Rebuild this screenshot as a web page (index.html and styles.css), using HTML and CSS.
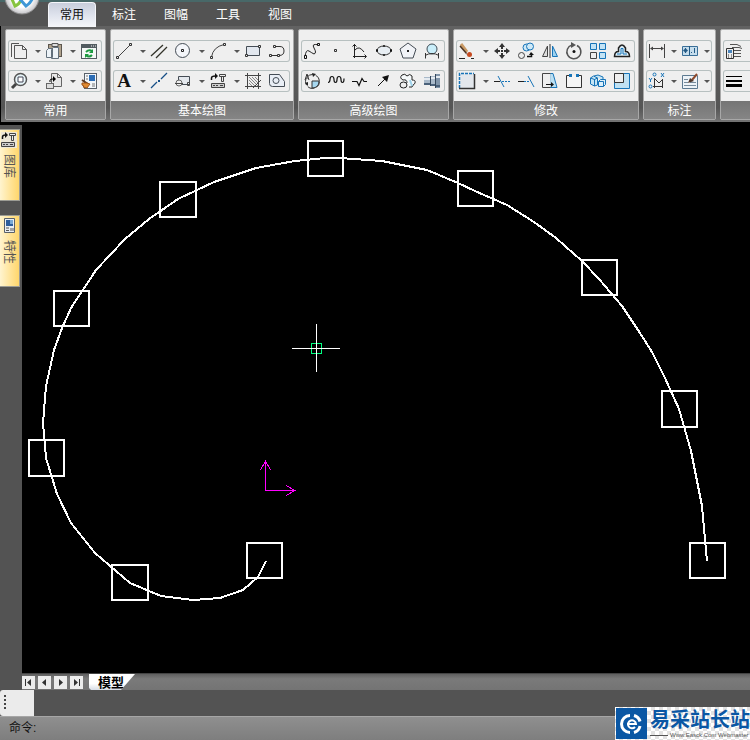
FILE: index.html
```html
<!DOCTYPE html>
<html lang="zh-CN">
    <head>
        <meta charset="UTF-8" />
        <meta name="viewport" content="width=device-width, initial-scale=1.0" />
        <title>模型</title>
        <link rel="stylesheet" href="styles.css">
    </head>
    <body>
        <header class="titlebar">
            <button class="app-button" aria-label="菜单">
                <svg width="36" height="36" viewBox="0 0 36 36">
                    <defs>
                        <radialGradient id="ball">
                            <stop offset="0.6" stop-color="#ffffff" />
                            <stop offset="1" stop-color="#c4c4c8" />
                        </radialGradient>
                    </defs>
                    <circle cx="18" cy="18" r="17" fill="url(#ball)" stroke="#8a8a8a" />
                    <path d="M7 18l4 9q5-2 7-8" fill="none" stroke="#86c440" stroke-width="3" />
                    <path d="M15 19l7 8q5-3 7-9" fill="none" stroke="#3f97d6" stroke-width="3" />
                </svg>
            </button>
            <nav class="tabs">
                <button class="tab active">常用</button>
                <button class="tab">标注</button>
                <button class="tab">图幅</button>
                <button class="tab">工具</button>
                <button class="tab">视图</button>
            </nav>
        </header>

        <div class="ribbon">
            <section class="panel">
                <div class="tools">
                    <div class="row">
                        <button class="tool" aria-label="复制">
                            <svg viewBox="0 0 20 20"><path d="M10 2.500H2.500V16" stroke="#555" /><path d="M5.500 4.500h8l4 4v9h-12z" fill="#eee" stroke="#555" /><path d="M13.500 4.500v4h4" stroke="#555" /></svg>
                        </button>
                        <button class="more" aria-label="更多复制"></button>
                        <button class="tool" aria-label="粘贴">
                            <svg viewBox="0 0 20 20"><rect x="4.500" y="3.500" width="13" height="12" fill="#b0a28d" stroke="#5c564e" /><path d="M8 2.500h6v3H8z" fill="#ddd" stroke="#555" /><path d="M2.500 9.500l2-2h4v9h-6zM7.500 8.500l2-2h5v11h-7z" fill="#edf3f8" stroke="#62707c" /></svg>
                        </button>
                        <button class="more" aria-label="更多粘贴"></button>
                        <button class="tool" aria-label="刷新">
                            <svg viewBox="0 0 20 20"><rect x="2.500" y="3.500" width="15" height="14" fill="#f5f9f7" stroke="#525b60" /><path d="M2 3h16v4H2z" fill="#525b60" /><path d="M12 5h1M14 5h1M16 5h1" stroke="#eee" /><path d="M7 11q3-3 6-1M13 14q-3 3-6 0" stroke="#1c9a40" stroke-width="2" /><path d="M14 8v4h-4zM6 17v-4h4z" fill="#1c9a40" /></svg>
                        </button>
                    </div>
                    <div class="row">
                        <button class="tool" aria-label="显示窗口">
                            <svg viewBox="0 0 20 20"><circle cx="11.500" cy="8.500" r="6" fill="#e8f6fa" stroke="#555" stroke-width="1.500" /><path d="M9 6h5v5H9z" fill="#fff" stroke="#445" /><path d="M7 13l-4 4" stroke="#444" stroke-width="3" /></svg>
                        </button>
                        <button class="more" aria-label="更多显示"></button>
                        <button class="tool" aria-label="块">
                            <svg viewBox="0 0 20 20"><path d="M7.500 2.500h6l4 4v9h-10z" fill="#e8e8e8" stroke="#666" /><path d="M13.500 2.500v4h4" stroke="#666" /><rect x="2.500" y="12.500" width="7" height="5" fill="#ddd" stroke="#666" /><path d="M6 11V9q0-1 3-1" stroke="#000" /><path d="M9 5l3 3-3 3z" fill="#000" /></svg>
                        </button>
                        <button class="more" aria-label="更多块"></button>
                        <button class="tool" aria-label="格式刷">
                            <svg viewBox="0 0 20 20"><rect x="5.500" y="2.500" width="12" height="15" fill="#f3f7fb" stroke="#59616a" /><path d="M10 4h6v6h-6z" fill="#2c6db5" /><path d="M7 5h2M7 8h2M13 13h3M13 15h3" stroke="#777" /><path d="M3 9l6 4" stroke="#5a3924" stroke-width="2" /><path d="M3 12h5l3 1-3 4-4-1 1-1-2-1z" fill="#e08a32" stroke="#9c5318" /></svg>
                        </button>
                    </div>
                </div>
                <h2>常用</h2>
            </section>

            <section class="panel">
                <div class="tools">
                    <div class="row">
                        <button class="tool" aria-label="直线">
                            <svg viewBox="0 0 20 20"><path d="M3 17L17 3" stroke="#444" /><path d="M2.500 15.500h2v2h-2zM15.500 2.500h2v2h-2z" fill="#eee" stroke="#333" /></svg>
                        </button>
                        <button class="more" aria-label="更多直线"></button>
                        <button class="tool" aria-label="平行线">
                            <svg viewBox="0 0 20 20"><path d="M2 15L14 4M7 17L18 6" stroke="#33332a" stroke-width="1.300" /></svg>
                        </button>
                        <button class="tool" aria-label="圆">
                            <svg viewBox="0 0 20 20"><circle cx="9.500" cy="9.500" r="7" fill="#f4f6fa" stroke="#444c55" /><path d="M8.500 8.500h2v2h-2z" stroke="#222" /></svg>
                        </button>
                        <button class="more" aria-label="更多圆"></button>
                        <button class="tool" aria-label="圆弧">
                            <svg viewBox="0 0 20 20"><path d="M3.500 16Q5 6 16 3.500" stroke="#444" /><path d="M2.500 15.500h2v2h-2zM15.500 2.500h2v2h-2z" fill="#eee" stroke="#333" /></svg>
                        </button>
                        <button class="more" aria-label="更多圆弧"></button>
                        <button class="tool" aria-label="矩形">
                            <svg viewBox="0 0 20 20"><path d="M3.500 5.500h13v9h-13z" fill="#e2e7ee" stroke="#444c55" /><path d="M2.500 13.500h2v2h-2zM15.500 4.500h2v2h-2z" fill="#eee" stroke="#333" /></svg>
                        </button>
                        <button class="tool" aria-label="多段线">
                            <svg viewBox="0 0 20 20"><path d="M8 5.500h5q4 0 4 4.500t-5 4.500H3" stroke="#333" /><path d="M6.500 4.500h2v2h-2zM2.500 13.500h2v2h-2zM10.500 13.500h2v2h-2z" fill="#eee" stroke="#333" /></svg>
                        </button>
                    </div>
                    <div class="row">
                        <button class="tool letter" aria-label="文字">A</button>
                        <button class="more" aria-label="更多文字"></button>
                        <button class="tool" aria-label="中心线">
                            <svg viewBox="0 0 20 20"><path d="M2 17l6-6M12 8l6-6" stroke="#174f86" stroke-width="1.300" /><path d="M9 9h2v2H9z" fill="#174f86" /></svg>
                        </button>
                        <button class="tool" aria-label="局部放大">
                            <svg viewBox="0 0 20 20"><path d="M5.500 5.500h11v8h-11z" fill="#e4e8ed" stroke="#444c55" /><circle cx="6" cy="12" r="3" fill="#eee" stroke="#666" /><path d="M2 12.500h8M14.500 11.500h2v3h-2z" stroke="#444" /></svg>
                        </button>
                        <button class="more" aria-label="更多放大"></button>
                        <button class="tool" aria-label="图库">
                            <svg viewBox="0 0 20 20"><path d="M3.500 9V7q0-2 4-2" stroke="#111" stroke-width="1.500" /><path d="M7 2l3 3-3 3z" fill="#111" /><path d="M11.500 3.500h6v2h-6zM13.500 5.500h2v5h-2z" fill="#eee" stroke="#444" /><path d="M3.500 12.500h13v4h-13z" fill="#ccc" stroke="#444" /><path d="M5 14.500h2M8 14.500h2M12 14.500h3" stroke="#444" /></svg>
                        </button>
                        <button class="more" aria-label="更多图库"></button>
                        <button class="tool" aria-label="剖面线">
                            <svg viewBox="0 0 20 20"><path d="M4.500 2v16M15.500 2v16M2 4.500h16M2 15.500h16" stroke="#444" /><path d="M6 12l3 3M6 9l6 6M6 6l9 9M9 6l6 6M12 6l3 3" stroke="#888" /><path d="M10 17l8-8" stroke="#444" /></svg>
                        </button>
                        <button class="tool" aria-label="填充">
                            <svg viewBox="0 0 20 20"><path d="M2.500 3.500h10l5 7v5h-12q-3 0-3-3z" fill="#e9eef5" stroke="#444c55" /><circle cx="9" cy="9.500" r="3" stroke="#444c55" /></svg>
                        </button>
                    </div>
                </div>
                <h2>基本绘图</h2>
            </section>

            <section class="panel">
                <div class="tools">
                    <div class="row">
                        <button class="tool" aria-label="样条">
                            <svg viewBox="0 0 20 20"><path d="M3 15.500Q4 8 7 10t5 3q3-1 0-6t5-3" stroke="#222" /><path d="M2.500 14.500h2v3h-2zM15.500 2.500h2v2h-2z" fill="#eee" stroke="#111" /></svg>
                        </button>
                        <button class="tool" aria-label="点">
                            <svg viewBox="0 0 20 20"><path d="M8.500 8.500h2v2h-2z" stroke="#333" /></svg>
                        </button>
                        <button class="tool" aria-label="公式曲线">
                            <svg viewBox="0 0 20 20"><path d="M4.500 3v14M3 15.500h13M5 9q4-5 9 2" stroke="#222" /><path d="M2.500 5.500l2-2 2 2M14.500 13.500l2 2-2 2" stroke="#222" /></svg>
                        </button>
                        <button class="tool" aria-label="椭圆">
                            <svg viewBox="0 0 20 20"><ellipse cx="10" cy="9.500" rx="7" ry="4.500" fill="#e8eef3" stroke="#333" /><path d="M2.500 8.500h1v2h-1zM16.500 8.500h1v2h-1zM9.500 4.500h1v1h-1zM9.500 13.500h1v1h-1z" fill="#fff" stroke="#111" /></svg>
                        </button>
                        <button class="tool" aria-label="正多边形">
                            <svg viewBox="0 0 20 20"><path d="M10 2l8 6-3 9H5L2 8z" fill="#f1f3f7" stroke="#444c55" /><path d="M9 9h2v2H9z" fill="#222" /></svg>
                        </button>
                        <button class="tool" aria-label="圆弧拟合">
                            <svg viewBox="0 0 20 20"><circle cx="10" cy="8" r="5" fill="#c9eefa" stroke="#3e4b55" /><path d="M3.500 12v5.500M16.500 12v5.500M3 14.500q7-4 14 0" stroke="#333" /></svg>
                        </button>
                    </div>
                    <div class="row">
                        <button class="tool" aria-label="局部视图">
                            <svg viewBox="0 0 20 20"><circle cx="10.500" cy="10.500" r="7" stroke="#333" stroke-dasharray="7 2" /><path d="M10 10h7q0 7-7 7z" fill="#a7d8f0" stroke="#333" /><path d="M3 9l2-6 2 6M4 7h2" stroke="#333" /><path d="M3 12l3-1v4zM10 2l4 1-3 3z" fill="#222" /></svg>
                        </button>
                        <button class="tool" aria-label="波浪线">
                            <svg viewBox="0 0 20 20"><path d="M2 11.500q2 0 2-3 0-3 2-3t2 3q0 3 1.500 3t1.500-3q0-3 2-3t2 3q0 3 1.500 3t1.500-4" stroke="#111" stroke-width="1.200" /></svg>
                        </button>
                        <button class="tool" aria-label="双折线">
                            <svg viewBox="0 0 20 20"><path d="M2 10.500h5l2 4 3-7 2 3h3" stroke="#111" stroke-width="1.200" /></svg>
                        </button>
                        <button class="tool" aria-label="箭头">
                            <svg viewBox="0 0 20 20"><path d="M4 15l7-7" stroke="#111" /><path d="M15 4l-2 7-5-5z" fill="#111" /></svg>
                        </button>
                        <button class="tool" aria-label="齿轮">
                            <svg viewBox="0 0 20 20"><path d="M4 4q3-2 5 1 3-3 5 0v4q4 0 3 3-1 2-2 2 0 3-4 2M4 4q-3 3 1 5 4-1 4 3" fill="#f5f9fa" stroke="#222" /><ellipse cx="5.500" cy="14" rx="3.500" ry="3" fill="#eee" stroke="#222" /><path d="M12 9l2 6" stroke="#9dd0e8" stroke-width="2" /></svg>
                        </button>
                        <button class="tool" aria-label="孔轴">
                            <svg viewBox="0 0 20 20"><path d="M2 6h6v8H2zM8 5h5v10H8z" fill="#a9b9c9" /><path d="M13 3h5v14h-5z" fill="#8195aa" /><path d="M2 8h6M8 7h5M13 6h5" stroke="#e4eaf0" stroke-width="2" /><path d="M2 13h6M8 14h5M13 15h5" stroke="#4a617a" stroke-width="2" /><path d="M13.500 3v14M8.500 5v10" stroke="#34465a" /></svg>
                        </button>
                    </div>
                </div>
                <h2>高级绘图</h2>
            </section>

            <section class="panel">
                <div class="tools">
                    <div class="row">
                        <button class="tool" aria-label="删除">
                            <svg viewBox="0 0 20 20"><path d="M2 17.500h6M14 17.500h3" stroke="#222" /><path d="M4 3l6 8" stroke="#c99a66" stroke-width="3" /><path d="M3 5l7 8" stroke="#4d3524" stroke-width="1.500" /><path d="M10 13l3-3" stroke="#eee" stroke-width="2" /><circle cx="12.500" cy="13.500" r="2.500" fill="#c64a20" /></svg>
                        </button>
                        <button class="more" aria-label="更多删除"></button>
                        <button class="tool" aria-label="平移">
                            <svg viewBox="0 0 20 20"><path d="M10 2l3 4H7zM10 18l3-4H7zM2 10l4-3v6zM18 10l-4-3v6z" fill="#333" /><path d="M10 6v2M10 12v2M6 10h2M12 10h2" stroke="#333" stroke-width="2" /><path d="M9 9h2v2H9z" fill="#333" /></svg>
                        </button>
                        <button class="tool" aria-label="平移复制">
                            <svg viewBox="0 0 20 20"><circle cx="5.500" cy="14.500" r="3" fill="#eee" stroke="#444" /><circle cx="10.500" cy="6.500" r="3.500" fill="#cfe9f7" stroke="#1774b8" /><circle cx="14" cy="5.500" r="3.500" fill="#cfe9f7" stroke="#1774b8" /><path d="M11 15.500h4.500V14" stroke="#111" stroke-width="1.500" /><path d="M13 14l2-3 3 3z" fill="#111" /></svg>
                        </button>
                        <button class="tool" aria-label="镜像">
                            <svg viewBox="0 0 20 20"><path d="M7.500 5v10.500h-5z" fill="#ddd" stroke="#444" /><path d="M12.500 5v10.500h5z" fill="#9ed2ef" stroke="#1774b8" /><path d="M10 3v14" stroke="#333" /></svg>
                        </button>
                        <button class="tool" aria-label="旋转">
                            <svg viewBox="0 0 20 20"><path d="M13 4.500a7 7 0 1 1-5-.5" stroke="#555" stroke-width="1.500" /><path d="M7 1l5 3-5 3z" fill="#555" /><circle cx="10" cy="10.500" r="1.500" fill="#111" /></svg>
                        </button>
                        <button class="tool" aria-label="阵列">
                            <svg viewBox="0 0 20 20"><path d="M2.500 2.500h6v6h-6zM11.500 2.500h6v6h-6zM11.500 11.500h6v6h-6z" fill="#c3e3f5" stroke="#1774b8" /><path d="M2.500 11.500h6v6h-6z" fill="#eee" stroke="#444" /></svg>
                        </button>
                        <button class="tool" aria-label="等距线">
                            <svg viewBox="0 0 20 20"><path d="M2.500 15.500h15q0-5-4-5V7q-3.500-6-7 0v3.500q-4 0-4 5z" fill="#dff0f9" stroke="#222" stroke-width="1.500" /><path d="M5 13h4V7.500h2V13h4" stroke="#1774b8" /></svg>
                        </button>
                    </div>
                    <div class="row">
                        <button class="tool" aria-label="裁剪框">
                            <svg viewBox="0 0 20 20"><path d="M3 3h14v14H3z" fill="#e3e7ec" /><path d="M2.500 17V2.500H17" stroke="#1774b8" stroke-width="1.500" stroke-dasharray="3 1" /><path d="M2 17.500h15.500V3" stroke="#333" stroke-width="1.500" /></svg>
                        </button>
                        <button class="more" aria-label="更多裁剪"></button>
                        <button class="tool" aria-label="裁剪">
                            <svg viewBox="0 0 20 20"><path d="M2 10.500h6" stroke="#222" /><path d="M6 5l6 11" stroke="#1774b8" /><path d="M10 10.500h8" stroke="#1774b8" stroke-dasharray="2 1" /></svg>
                        </button>
                        <button class="tool" aria-label="延伸">
                            <svg viewBox="0 0 20 20"><path d="M2 10.500h6" stroke="#222" /><path d="M8 10.500h6" stroke="#1774b8" stroke-dasharray="2 1" /><path d="M12 5l6 11" stroke="#1774b8" /></svg>
                        </button>
                        <button class="tool" aria-label="拉伸">
                            <svg viewBox="0 0 20 20"><path d="M10 2.500h3l4 14h-7z" fill="#b9dff3" stroke="#1774b8" /><path d="M10.500 16.500h-8v-14h8" fill="#eee" stroke="#444" /><path d="M6 13.500h6" stroke="#111" /><path d="M11 11l3 2.500-3 2.500z" fill="#111" /></svg>
                        </button>
                        <button class="tool" aria-label="打断">
                            <svg viewBox="0 0 20 20"><path d="M5 4.500H2.500v12h15v-12H15" fill="#f5f5f5" stroke="#333" /><path d="M5 3h3v3H5zM12 3h3v3h-3z" fill="#1774b8" /></svg>
                        </button>
                        <button class="tool" aria-label="分解">
                            <svg viewBox="0 0 20 20"><path d="M2.500 7l3-2 4 2v7l-3 1-4-2zM6 5l4-1 5 2v3" fill="#c5e5f5" stroke="#1774b8" /><path d="M10.500 10.500l2-2h5v5l-2 2h-5z" fill="#dceffa" stroke="#1774b8" /><path d="M10.500 10.500h5v5M6.500 8v7M2.500 7l4 1.500 3-1.500" stroke="#1774b8" /></svg>
                        </button>
                        <button class="tool" aria-label="缩放">
                            <svg viewBox="0 0 20 20"><path d="M2.500 2.500h15v15h-15z" fill="#bfe1f3" stroke="#1774b8" /><path d="M2.500 2.500h9v9h-9z" fill="#eee" stroke="#333" /></svg>
                        </button>
                    </div>
                </div>
                <h2>修改</h2>
            </section>

            <section class="panel narrow">
                <div class="tools">
                    <div class="row">
                        <button class="tool" aria-label="尺寸标注">
                            <svg viewBox="0 0 20 20"><path d="M2.500 3v14M17.500 3v14M4 7.500h12" stroke="#444" /><path d="M3 7.500l3-2v4zM17 7.500l-3-2v4z" fill="#444" /></svg>
                        </button>
                        <button class="more" aria-label="更多尺寸"></button>
                        <button class="tool" aria-label="公差">
                            <svg viewBox="0 0 20 20"><path d="M2.500 5.500h15v9h-15z" fill="#c6ddec" stroke="#3a6f98" /><path d="M9.500 5v9M3.500 9.500h4M5.500 7v5M14.500 7v5M11 11.500h1" stroke="#235a86" /><circle cx="5.500" cy="9.500" r="1.500" stroke="#235a86" /></svg>
                        </button>
                        <button class="more" aria-label="更多公差"></button>
                    </div>
                    <div class="row">
                        <button class="tool" aria-label="坐标标注">
                            <svg viewBox="0 0 20 20"><path d="M7.500 7v10M6 15.500h10M8 8l4 4 4-4M15.500 8v9" stroke="#333" /><circle cx="3.500" cy="15.500" r="1.500" stroke="#1774b8" /><circle cx="7.500" cy="3.500" r="1.500" stroke="#1774b8" /><path d="M2 7l1.500 2L5 7M3.500 9v2M14 2l3 4M17 2l-3 4" stroke="#1774b8" /></svg>
                        </button>
                        <button class="more" aria-label="更多坐标"></button>
                        <button class="tool" aria-label="标注编辑">
                            <svg viewBox="0 0 20 20"><path d="M2.500 4.500h15v13h-15z" fill="#edf3f8" stroke="#5d7a91" /><path d="M4 8.500h4M4 11.500h4M10 11.500h6M4 14.500h12" stroke="#778b9b" /><path d="M17 3l-5 6" stroke="#8e4a2c" stroke-width="2" /><path d="M10 7l4 3-6 2z" fill="#51392d" /></svg>
                        </button>
                        <button class="more" aria-label="更多编辑"></button>
                    </div>
                </div>
                <h2>标注</h2>
            </section>

            <section class="panel last">
                <div class="tools">
                    <div class="row">
                        <button class="tool" aria-label="特性">
                            <svg viewBox="0 0 20 20"><path d="M6 3.500h7l4 2M8 6.500h7l3 1M10 9.500h7M10 12.500h7M10 15.500h7" stroke="#555" /><path d="M2.500 7.500h7v10h-7z" fill="#eee" stroke="#333" /><path d="M4 9h4v3H4z" fill="#4a86be" /><path d="M4 14h1M7 14h1M4 16h1M7 16h1" stroke="#333" /></svg>
                        </button>
                    </div>
                    <div class="row">
                        <button class="tool" aria-label="线宽">
                            <svg viewBox="0 0 20 20"><path d="M2 5.500h16" stroke="#000" /><path d="M2 10h16" stroke="#000" stroke-width="2" /><path d="M2 14.500h16" stroke="#000" stroke-width="3" /></svg>
                        </button>
                    </div>
                </div>
                <h2></h2>
            </section>
        </div>

        <main class="workspace">
            <aside class="sidebar">
                <button class="side-tab">
                    <svg width="16" height="16" viewBox="0 0 16 16">
                        <path d="M0 0h16v16H0z" fill="#ebe6d7" />
                        <path d="M1.500 7V5q0-2 3-2" stroke="#111" stroke-width="1.500" />
                        <path d="M4 0l3 3-3 3z" fill="#111" />
                        <path d="M8.500 1.500h6v2h-6zM10.500 3.500h2v5h-2z" fill="#eee" stroke="#444" />
                        <path d="M.500 10.500h13v4H.500z" fill="#ccc" stroke="#444" />
                        <path d="M2 12.500h2M5 12.500h2M9 12.500h3" stroke="#444" />
                    </svg>
                    <span>图库</span>
                </button>
                <button class="side-tab">
                    <svg width="16" height="16" viewBox="0 0 16 16">
                        <path d="M3.500.500h10v14h-10z" fill="#e8edf2" stroke="#59616a" />
                        <path d="M5 2h7v6H5z" fill="#2c5d9c" />
                        <path d="M9 2h3v4H9z" fill="#79a9d5" />
                        <path d="M5 10h3M5 12.500h3M10 10v3M12 10v3" stroke="#555" />
                    </svg>
                    <span>特性</span>
                </button>
            </aside>
            <div class="canvas">
                <svg width="728" height="548" viewBox="22 125 728 548">
                    <polyline class="curve" points="266,561 258,577 243,590 220,598 193,600 161,596 130,583 95,553 71,523 57,494 46,458 43,423 46,386 54,350 62,328 71,308 96,270 125,239 149,219 178,199 214,182 256,168 295,161 325,158 340,158 382,161 427,170 458,183 475,191 507,205 534,222 556,238 582,261 599,279 622,306 640,333 652,352 665,378 679,409 691,451 702,506 707,561" />
                    <g class="nodes">
                        <rect x="247" y="543" width="35" height="35" />
                        <rect x="112" y="565" width="36" height="35" />
                        <rect x="29" y="440" width="35" height="36" />
                        <rect x="54" y="291" width="35" height="35" />
                        <rect x="160" y="182" width="36" height="35" />
                        <rect x="308" y="141" width="35" height="35" />
                        <rect x="458" y="171" width="35" height="35" />
                        <rect x="582" y="260" width="35" height="35" />
                        <rect x="662" y="391" width="35" height="36" />
                        <rect x="690" y="543" width="35" height="35" />
                    </g>
                    <rect class="pick" x="311.500" y="343.500" width="10" height="10" />
                    <path class="cursor" d="M292 348.500h48M316.500 324v48" />
                    <path class="axes" d="M265.500 461v29.500H296M260.500 470l5-9 5 9M286 485.500l9 5-9 5" />
                </svg>
            </div>
        </main>

        <div class="sheets">
            <div class="sheet-nav">
                <button aria-label="第一页"><svg viewBox="0 0 13 13"><path d="M3 3h1v7H3zM9 3v7L5 6.500z" /></svg></button>
                <button aria-label="上一页"><svg viewBox="0 0 13 13"><path d="M8 3v7L4 6.500z" /></svg></button>
                <button aria-label="下一页"><svg viewBox="0 0 13 13"><path d="M5 3v7l4-3.500z" /></svg></button>
                <button aria-label="最后页"><svg viewBox="0 0 13 13"><path d="M4 3v7l4-3.500zM9 3h1v7H9z" /></svg></button>
            </div>
            <button class="sheet">模型</button>
        </div>

        <div class="dock">
            <div class="grip"><i></i><i></i><i></i><i></i></div>
        </div>

        <footer class="command">命令:</footer>

        <div class="brand">
            <svg width="31" height="31" viewBox="0 0 31 31">
                <path d="M0 0h31v31H0z" fill="#0a57a4" />
                <path d="M14 7.500a8.500 8.500 0 0 0 0 17M18 7.500a8.500 8.500 0 0 1 6 6M24 18a8.500 8.500 0 0 1-6 6.500" fill="none" stroke="#fff" stroke-width="3" />
                <path d="M11 16h9a4 4 0 1 0-1 3" fill="none" stroke="#fff" stroke-width="2" />
            </svg>
            <div class="brand-text">
                <strong>易采站长站</strong>
                <small>Www.Easck.Com Webmaster</small>
            </div>
        </div>
    </body>
</html>
```
FILE: styles.css
```css
* {
    box-sizing: border-box;
}
body {
    margin: 0;
    min-height: 100vh;
    display: flex;
    flex-direction: column;
    position: relative;
    overflow: hidden;
    background: #535353;
    font-family: 'Liberation Sans', 'Noto Sans CJK SC', sans-serif;
    font-size: 12px;
    line-height: 16px;
}
button {
    margin: 0;
    padding: 0;
    border: none;
    background: none;
    color: inherit;
    font: inherit;
}
svg {
    display: block;
}

/* 标题与选项卡 */
.titlebar {
    position: relative;
    height: 26px;
    padding-left: 46px;
    border-top: 2px solid #486868;
    background: #535353;
}
.app-button {
    position: absolute;
    left: 4px;
    top: -23px;
    z-index: 1;
}
.tabs {
    display: flex;
}
.tab {
    width: 52px;
    height: 25px;
    color: #fff;
}
.tab.active {
    width: 48px;
    margin: 0 2px;
    border: 1px solid #f5f6fa;
    border-bottom: none;
    border-radius: 4px 4px 0 0;
    background: linear-gradient(#c9cedb, #dfe3ed 50%, #f6f7fa);
    color: #111;
}

/* 功能区 */
.ribbon {
    display: flex;
    gap: 4px;
    height: 96px;
    padding: 3px 0 2px 4px;
    border-left: 1px solid #000;
    background: linear-gradient(#626262, #555 85%, #747474);
    overflow: hidden;
}
.panel {
    flex: none;
    display: flex;
    flex-direction: column;
    height: 91px;
    border: 1px solid #a8a8a8;
    border-radius: 2px;
    background: #efefef;
}
.panel h2 {
    height: 18px;
    margin: 0;
    padding-top: 1px;
    background: linear-gradient(#757575, #858585);
    color: #fff;
    font-size: 12px;
    font-weight: normal;
    line-height: 18px;
    text-align: center;
}
.panel.last {
    width: 120px;
}
.tools {
    flex: 1;
    display: flex;
    flex-direction: column;
    gap: 8px;
    padding: 10px 3px 0 2px;
}
.row {
    display: flex;
    height: 22px;
    border-radius: 3px;
    box-shadow: inset 0 0 0 1px #b7c0c0;
}
.tool {
    width: 24px;
    height: 22px;
    padding: 1px 3px 1px 1px;
}
.narrow .tool {
    width: 22px;
    padding-right: 1px;
}
.tool svg {
    width: 20px;
    height: 20px;
    fill: none;
}
.tool.letter {
    color: #111;
    font-family: 'Liberation Serif', serif;
    font-size: 19px;
    font-weight: bold;
    line-height: 20px;
}
.more {
    width: 11px;
    height: 22px;
}
.more::before {
    content: '';
    display: block;
    width: 0;
    margin: 0 auto;
    border: solid transparent;
    border-width: 3px 3px 0;
    border-top-color: #555;
}

/* 绘图区 */
.workspace {
    flex: 1;
    display: flex;
    border-top: 3px solid #000;
}
.sidebar {
    width: 22px;
    padding-top: 4px;
    display: flex;
    flex-direction: column;
    gap: 14px;
    background: #535353;
}
.side-tab {
    width: 20px;
    height: 72px;
    padding: 2px 2px 0 0;
    display: flex;
    flex-direction: column;
    align-items: center;
    gap: 6px;
    border: 1px solid #9c9c94;
    border-left: none;
    background: linear-gradient(90deg, #fff4cf, #ffd66b);
    color: #555;
}
.side-tab svg {
    fill: none;
}
.side-tab span {
    writing-mode: vertical-rl;
    text-orientation: sideways;
}
.canvas {
    flex: 1;
    min-width: 0;
    overflow: hidden;
    background: #000;
}
.canvas svg {
    fill: none;
    shape-rendering: crispEdges;
}
.curve,
.nodes {
    stroke: #fff;
    stroke-width: 2;
}
.cursor {
    stroke: #fff;
}
.pick {
    stroke: #00ff80;
}
.axes {
    stroke: #f0f;
}

/* 页签 */
.sheets {
    display: flex;
    height: 17px;
    margin-left: 22px;
    border-top: 1px solid #444;
    background: linear-gradient(#606060, #7a7a7a 30%, #747474);
}
.sheet-nav {
    display: flex;
    gap: 3px;
    padding-top: 2px;
    margin-right: 6px;
}
.sheet-nav button {
    width: 13px;
    height: 13px;
    background: #ececec;
}
.sheet-nav svg {
    fill: #333;
}
.sheet {
    width: 46px;
    height: 16px;
    padding: 1px 2px 0 0;
    background: linear-gradient(#fff, #fff 60%, #d7dce5);
    clip-path: polygon(0 0, 100% 0, 32px 100%, 2px 100%, 0 14px);
    color: #000;
    font-size: 13px;
    font-weight: bold;
    line-height: 15px;
}

/* 命令行 */
.dock {
    height: 26px;
    background: #535353;
}
.grip {
    width: 34px;
    height: 26px;
    padding: 5px 4px;
    display: flex;
    flex-direction: column;
    gap: 2px;
    border-radius: 3px 0 0 3px;
    background: #ebebeb;
}
.grip i {
    width: 2px;
    height: 2px;
    background: #444;
}
.command {
    height: 24px;
    padding-left: 9px;
    border-top: 1px solid #a6a6a6;
    background: linear-gradient(#8f8f8f, #7e7e7e);
    color: #111;
    line-height: 22px;
}

/* 右下角标识 */
.brand {
    position: absolute;
    right: 0;
    bottom: 0;
    width: 135px;
    height: 33px;
    padding: 1px;
    display: flex;
    gap: 3px;
    background: repeating-conic-gradient(#e2e2e2 0 25%, #fff 0 50%) 0 0 / 8px 8px;
}
.brand svg,
.brand-text {
    flex: none;
}
.brand strong {
    display: block;
    color: #0a57a4;
    font-size: 20px;
    line-height: 24px;
    white-space: nowrap;
}
.brand small {
    display: flex;
    align-items: center;
    gap: 2px;
    color: #555;
    font-size: 6px;
    line-height: 6px;
    white-space: nowrap;
}
.brand small::before {
    content: '';
    width: 18px;
    height: 1px;
    background: #555;
}
```
